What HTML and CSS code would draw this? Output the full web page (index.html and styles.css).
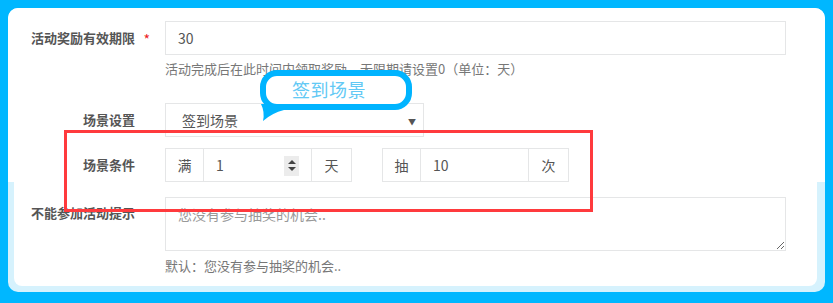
FILE: index.html
```html
<!DOCTYPE html>
<html lang="zh-CN">
<head>
<meta charset="utf-8">
<title>场景设置</title>
<link rel="stylesheet" href="styles.css">
</head>
<body>
<div class="frame">
  <div class="panel">
    <div class="top">
      <div class="row">
        <label class="label req">活动奖励有效期限</label>
        <div class="field">
          <div class="input">30</div>
          <div class="help">活动完成后在此时间内领取奖励，无限期请设置0（单位：天）</div>
        </div>
      </div>
      <div class="row row-select">
        <label class="label">场景设置</label>
        <div class="field">
          <div class="select"><span>签到场景</span><span class="caret">▼</span></div>
        </div>
      </div>
      <div class="row row-cond">
        <label class="label">场景条件</label>
        <div class="field groups">
          <div class="group">
            <span class="addon">满</span>
            <div class="gin"><span>1</span><span class="spin"><i class="up"></i><i class="down"></i></span></div>
            <span class="addon addon-r">天</span>
          </div>
          <div class="group">
            <span class="addon">抽</span>
            <div class="gin"><span>10</span></div>
            <span class="addon addon-r">次</span>
          </div>
        </div>
      </div>
    </div>
    <div class="bottom">
      <div class="row row-ta">
        <label class="label">不能参加活动提示</label>
        <div class="field">
          <textarea class="ta" placeholder="您没有参与抽奖的机会.."></textarea>
          <div class="help help2">默认：您没有参与抽奖的机会..</div>
        </div>
      </div>
    </div>
  </div>
  <div class="bubble"><span>签到场景</span>
    <svg class="tail" width="26" height="20" viewBox="0 0 26 20"><path d="M1 0 L8 0 L24 6 Q12 9 3 17 Q5 8 1 0 Z" fill="#00b4ff"/></svg>
  </div>
  <div class="redbox"></div>
</div>
</body>
</html>
```
FILE: styles.css
```css
html, body { margin: 0; padding: 0; }
body {
  background: #00b7ff;
  font-family: "Noto Sans CJK SC", "Noto Sans", sans-serif;
  width: 833px;
  height: 303px;
  overflow: hidden;
}
.frame {
  position: relative;
  padding: 8px 8px 11px 8px;
}
.panel {
  background: #d6f2fd;
  border-radius: 10px;
  overflow: hidden;
  height: 284px;
}
.top {
  background: #fff;
  height: 174px;
  padding: 13px 39px 0 0;
  box-sizing: border-box;
}
.bottom {
  background: #fff;
  margin: 0 8px 0 6px;
  height: 104px;
  border-radius: 0 0 8px 8px;
  padding: 15px 31px 0 0;
  box-sizing: border-box;
}
.row {
  display: grid;
  grid-template-columns: 127px 1fr;
  column-gap: 30px;
  align-items: start;
}
.bottom .row { grid-template-columns: 121px 1fr; }
.label {
  text-align: right;
  font-size: 13px;
  font-weight: bold;
  color: #555;
  line-height: 34px;
  position: relative;
  white-space: nowrap;
}
.req::after {
  content: "*";
  color: #ed1c24;
  position: absolute;
  right: -15px;
  top: 1px;
  font-weight: normal;
  font-size: 14px;
}
.input {
  height: 34px;
  box-sizing: border-box;
  border: 1px solid #e5e6e7;
  padding: 0 12px;
  font-size: 14px;
  line-height: 32px;
  color: #555;
}
.help {
  margin-top: 5px;
  font-size: 13px;
  line-height: 18px;
  color: #777;
}
.row-select { margin-top: 25px; }
.select {
  width: 259px;
  height: 34px;
  box-sizing: border-box;
  border: 1px solid #e5e6e7;
  display: flex;
  align-items: center;
  justify-content: space-between;
  padding: 0 7px 0 16px;
  font-size: 14px;
  color: #555;
}
.caret { font-size: 8px; color: #555; margin-top: 2px; }
.row-cond { margin-top: 11px; }
.groups { display: flex; gap: 30px; }
.group { display: flex; height: 34px; }
.addon {
  width: 39px;
  box-sizing: border-box;
  border: 1px solid #e5e6e7;
  display: flex;
  align-items: center;
  justify-content: center;
  font-size: 14px;
  color: #555;
}
.addon-r { width: 40px; border-left: 0; }
.gin {
  width: 108px;
  box-sizing: border-box;
  border: 1px solid #e5e6e7;
  border-left: 0;
  display: flex;
  align-items: center;
  justify-content: space-between;
  padding: 0 12px 0 12px;
  font-size: 14px;
  color: #555;
}
.spin {
  width: 15px;
  height: 20px;
  background: #ececec;
  display: flex;
  flex-direction: column;
  align-items: center;
  justify-content: center;
  gap: 3px;
  margin-top: 1px;
}
.spin i { width: 0; height: 0; border-left: 4px solid transparent; border-right: 4px solid transparent; }
.spin .up { border-bottom: 4px solid #444; }
.spin .down { border-top: 4px solid #444; }
.ta {
  display: block;
  width: 100%;
  height: 54px;
  box-sizing: border-box;
  border: 1px solid #e5e6e7;
  padding: 6px 12px;
  font-family: inherit;
  font-size: 14px;
  line-height: 20px;
  color: #555;
  margin: 0;
}
.ta::placeholder { color: #999; }
.help2 { margin-top: 6px; }
.bottom .label { line-height: 32px; }

.bubble {
  position: absolute;
  left: 260px;
  top: 70px;
  width: 152px;
  height: 40px;
  box-sizing: border-box;
  border: 6px solid #00b4ff;
  border-radius: 17px;
  background: #fff;
  display: flex;
  align-items: center;
  justify-content: center;
  font-size: 18px;
  color: #62c9f5;
  letter-spacing: 0.5px;
}
.bubble span { margin-left: -14px; margin-top: -2px; }
.tail {
  position: absolute;
  left: -6px;
  top: 28px;
}
.redbox {
  position: absolute;
  left: 64px;
  top: 130px;
  width: 529px;
  height: 82px;
  box-sizing: border-box;
  border: 3px solid #ff3a3d;
}
```
